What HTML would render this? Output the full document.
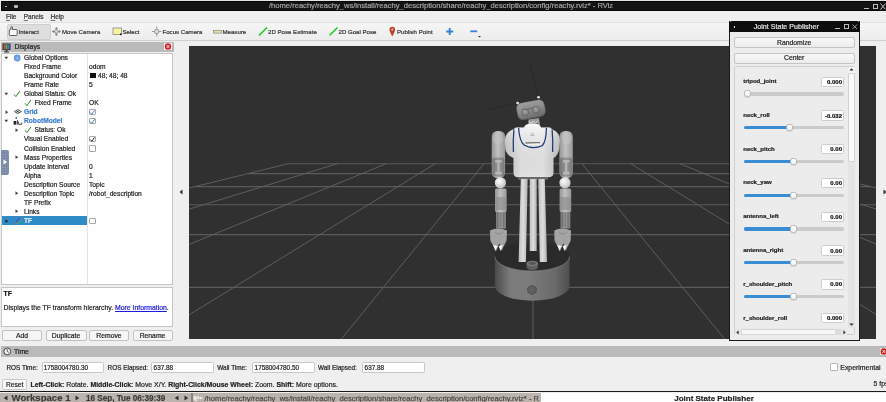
<!DOCTYPE html>
<html><head><meta charset="utf-8"><style>
html,body{margin:0;padding:0;}
body{width:886px;height:402px;overflow:hidden;position:relative;background:#efefef;font-family:"Liberation Sans",sans-serif;}
.t{position:absolute;white-space:nowrap;line-height:12px;height:12px;-webkit-text-stroke-width:0.2px;}
u{text-decoration:underline;text-underline-offset:1px;text-decoration-thickness:0.5px;text-decoration-color:#777;}
</style></head><body>
<div style="position:absolute;left:0;top:0;width:886px;height:402px;will-change:transform;background:#efefef">
<div style="position:absolute;left:0px;top:0px;width:886px;height:1.2px;background:#e4e4e4"></div>
<div style="position:absolute;left:1.2px;top:1.2px;width:884.8px;height:10.3px;background:#141414;border:0.6px solid #050505;box-sizing:border-box"></div>
<div style="position:absolute;left:0;top:1.2px;width:886px;height:10.3px;overflow:hidden"><div class="t" style="left:269px;top:-0.8px;font-size:7.58px;color:#a4a4a4">/home/reachy/reachy_ws/install/reachy_description/share/reachy_description/config/reachy.rviz* - RViz</div></div>
<div style="position:absolute;left:5px;top:5.5px;width:1.5px;height:1.5px;background:#bbb"></div>
<div style="position:absolute;left:14px;top:5px;width:4px;height:2.5px;background:#bbb;border-radius:1px"></div>
<div style="position:absolute;left:864px;top:8px;width:5px;height:1.2px;background:#bbb"></div>
<div style="position:absolute;left:872.6px;top:3.5px;width:5px;height:5px;border:1.2px solid #bbb;box-sizing:border-box"></div>
<svg style="position:absolute;left:880px;top:3px" width="6" height="7"><path d="M0.5 0.5L5.5 6.5M5.5 0.5L0.5 6.5" stroke="#bbb" stroke-width="1"/></svg>
<div class="t" style="left:6px;top:10.80px;font-size:6.5px;color:#333;font-weight:400;"><u>F</u>ile</div>
<div class="t" style="left:23.7px;top:10.80px;font-size:6.5px;color:#333;font-weight:400;"><u>P</u>anels</div>
<div class="t" style="left:50.6px;top:10.80px;font-size:6.5px;color:#333;font-weight:400;"><u>H</u>elp</div>
<div style="position:absolute;left:0px;top:21.6px;width:886px;height:18.4px;background:linear-gradient(#f6f6f6,#ededed)"></div>
<div style="position:absolute;left:0px;top:21.6px;width:886px;height:0.8px;background:#e2e2e2"></div>
<div style="position:absolute;left:0px;top:40px;width:886px;height:1px;background:#cfcfcf"></div>
<div style="position:absolute;left:7px;top:23.5px;width:44px;height:16px;background:#dedede;border:1px solid #cfcfcf;border-radius:2px;box-sizing:border-box"></div>
<div class="t" style="left:18.5px;top:25.80px;font-size:6.1px;color:#333;font-weight:400;">Interact</div>
<div class="t" style="left:62px;top:25.80px;font-size:6.1px;color:#333;font-weight:400;">Move Camera</div>
<div class="t" style="left:122.5px;top:25.80px;font-size:6.1px;color:#333;font-weight:400;">Select</div>
<div class="t" style="left:162.5px;top:25.80px;font-size:6.1px;color:#333;font-weight:400;">Focus Camera</div>
<div class="t" style="left:222.5px;top:25.80px;font-size:6.1px;color:#333;font-weight:400;">Measure</div>
<div class="t" style="left:268px;top:25.80px;font-size:6.1px;color:#333;font-weight:400;">2D Pose Estimate</div>
<div class="t" style="left:338.5px;top:25.80px;font-size:6.1px;color:#333;font-weight:400;">2D Goal Pose</div>
<div class="t" style="left:397px;top:25.80px;font-size:6.1px;color:#333;font-weight:400;">Publish Point</div>
<svg style="position:absolute;left:0;top:22px" width="490" height="18">
<path d="M11 7.3 L11 4.9 Q11.7 4 12.4 4.9 L12.4 7.5 L16.4 7.5 Q17.2 7.5 17.2 8.3 L17.2 12.8 Q17.2 13.5 16.4 13.5 L10.1 13.5 Q9.3 13.5 9.3 12.8 L9.3 8.4 Q9.3 7.5 10.2 7.3Z" fill="#f8f8f8" stroke="#333" stroke-width="0.75"/>
<g stroke="#6a6a6a" stroke-width="0.7" fill="none"><path d="M56.4 5.5 L56.4 13.5 M52.4 9.5 L60.4 9.5 M55 6.9 L56.4 5.5 L57.8 6.9 M55 12.1 L56.4 13.5 L57.8 12.1 M53.8 8.1 L52.4 9.5 L53.8 10.9 M59 8.1 L60.4 9.5 L59 10.9"/><circle cx="56.4" cy="9.5" r="1.8" fill="#e0e0e0"/></g>
<rect x="113" y="6" width="8.5" height="6.5" fill="#f7f3a0" stroke="#777" stroke-width="0.7"/>
<rect x="120" y="11.5" width="1.6" height="1.6" fill="#111"/>
<g stroke="#888" stroke-width="0.8" fill="none"><path d="M156.7 4.5 L156.7 14.5 M152 9.5 L161.5 9.5"/><circle cx="156.7" cy="9.5" r="2.3" fill="#ddd"/></g>
<rect x="213.5" y="8.3" width="8" height="2.8" fill="#e8e0a0" stroke="#777" stroke-width="0.6"/>
<path d="M259 13.5 L267 5.5" stroke="#22cc22" stroke-width="1.6"/>
<path d="M329.5 13.5 L337.5 5.5" stroke="#22cc22" stroke-width="1.6"/>
<path d="M392.3 14.5 Q389.5 9.5 389.5 7.5 A2.8 2.8 0 0 1 395.1 7.5 Q395.1 9.5 392.3 14.5Z" fill="#b8442c"/>
<circle cx="392.3" cy="7.5" r="0.9" fill="#f0d0c0"/>
<path d="M449.7 6 L449.7 13 M446.2 9.5 L453.2 9.5" stroke="#3a80d2" stroke-width="1.9"/>
<path d="M470.3 9.3 L477.2 9.3" stroke="#3a80d2" stroke-width="1.8"/>
<path d="M478 14 L481 14 L479.5 15.5Z" fill="#333"/>
</svg>
<div style="position:absolute;left:1px;top:42.2px;width:172.5px;height:10.3px;background:#bababa"></div>
<div class="t" style="left:14.5px;top:41.30px;font-size:6.8px;color:#1e1e1e;font-weight:400;">Displays</div>
<svg style="position:absolute;left:2px;top:43px" width="11" height="10">
<rect x="0.5" y="0.5" width="8" height="6.5" fill="#333"/>
<rect x="1.5" y="1.3" width="2" height="5" fill="#e04040"/><rect x="3.5" y="1.3" width="2" height="5" fill="#40c040"/><rect x="5.5" y="1.3" width="2" height="5" fill="#6060e0"/>
<rect x="3.5" y="7" width="2" height="1.5" fill="#333"/><rect x="2" y="8.5" width="5" height="1" fill="#333"/>
</svg>
<div style="position:absolute;left:164px;top:43.2px;width:8px;height:7px;background:#f4f4f4"></div>
<svg style="position:absolute;left:164px;top:43px" width="8" height="7"><circle cx="4" cy="3.5" r="3.2" fill="#d42020"/><path d="M2.6 2.1L5.4 4.9M5.4 2.1L2.6 4.9" stroke="#fff" stroke-width="0.9"/></svg>
<div style="position:absolute;left:1px;top:52.8px;width:172px;height:232px;background:#fff;border:1px solid #c6c6c6;box-sizing:border-box"></div>
<div style="position:absolute;left:87.3px;top:53.5px;width:0.8px;height:230px;background:#e4e4e4"></div>
<div style="position:absolute;left:1.8px;top:216.1px;width:85.5px;height:8.7px;background:#308cc6"></div>
<div class="t" style="left:24px;top:51.80px;font-size:6.65px;color:#1e1e1e;font-weight:400;">Global Options</div>
<svg style="position:absolute;left:4.2px;top:55.5px" width="5" height="4"><path d="M0.3 0.8L4.2 0.8L2.25 3.2Z" fill="#444"/></svg>
<svg style="position:absolute;left:13px;top:53.5px" width="9" height="8"><circle cx="4.2" cy="4" r="3.4" fill="#6c9be0"/><circle cx="4.2" cy="4" r="1.5" fill="#8fb5ee"/></svg>
<div class="t" style="left:24px;top:60.90px;font-size:6.65px;color:#1e1e1e;font-weight:400;">Fixed Frame</div>
<div class="t" style="left:89px;top:60.90px;font-size:6.65px;color:#1e1e1e;font-weight:400;">odom</div>
<div class="t" style="left:24px;top:69.90px;font-size:6.65px;color:#1e1e1e;font-weight:400;">Background Color</div>
<div style="position:absolute;left:90px;top:73px;width:5.5px;height:5px;background:#111"></div>
<div class="t" style="left:98px;top:69.90px;font-size:6.65px;color:#1e1e1e;font-weight:400;">48; 48; 48</div>
<div class="t" style="left:24px;top:79.00px;font-size:6.65px;color:#1e1e1e;font-weight:400;">Frame Rate</div>
<div class="t" style="left:89px;top:79.00px;font-size:6.65px;color:#1e1e1e;font-weight:400;">5</div>
<div class="t" style="left:24px;top:88.10px;font-size:6.65px;color:#1e1e1e;font-weight:400;">Global Status: Ok</div>
<svg style="position:absolute;left:4.2px;top:91.8px" width="5" height="4"><path d="M0.3 0.8L4.2 0.8L2.25 3.2Z" fill="#444"/></svg>
<svg style="position:absolute;left:13px;top:89.8px" width="9" height="8"><path d="M1 4.3L2.9 6.6L6.9 0.9" stroke="#2a8c2a" stroke-width="1" fill="none"/></svg>
<div class="t" style="left:34.5px;top:97.10px;font-size:6.65px;color:#1e1e1e;font-weight:400;">Fixed Frame</div>
<svg style="position:absolute;left:23.5px;top:98.8px" width="9" height="8"><path d="M1 4.3L2.9 6.6L6.9 0.9" stroke="#2a8c2a" stroke-width="1" fill="none"/></svg>
<div class="t" style="left:89px;top:97.10px;font-size:6.65px;color:#1e1e1e;font-weight:400;">OK</div>
<div class="t" style="left:24px;top:106.20px;font-size:6.65px;color:#3a7bd0;font-weight:700;">Grid</div>
<svg style="position:absolute;left:4.7px;top:109.7px" width="4" height="5"><path d="M0.5 0.3L3.2 2.2L0.5 4.1Z" fill="#444"/></svg>
<svg style="position:absolute;left:13.5px;top:108.9px" width="9" height="6"><path d="M0.3 2.6L3.8 0.6L7.5 2.6L3.8 4.6Z M2 1.6L5.6 3.6 M5.6 1.6L2 3.6" stroke="#333" stroke-width="0.75" fill="none"/></svg>
<div style="position:absolute;left:89px;top:108.7px;width:6.5px;height:6.5px;background:#fff;border:0.8px solid #a8a8a8;border-radius:1px;box-sizing:border-box"></div>
<svg style="position:absolute;left:89px;top:108.7px" width="7" height="7"><path d="M1.3 3.6L2.8 5.2L5.6 1.3" stroke="#2a6ad0" stroke-width="0.9" fill="none"/></svg>
<div class="t" style="left:24px;top:115.30px;font-size:6.65px;color:#3a7bd0;font-weight:700;">RobotModel</div>
<svg style="position:absolute;left:4.2px;top:119px" width="5" height="4"><path d="M0.3 0.8L4.2 0.8L2.25 3.2Z" fill="#444"/></svg>
<svg style="position:absolute;left:13px;top:116px" width="10" height="10"><circle cx="3.3" cy="2" r="0.9" fill="#4a5cc0"/><rect x="0.6" y="5" width="2.8" height="3.6" fill="#222"/><rect x="4" y="4" width="0.9" height="4.6" fill="#444"/><path d="M5.6 5.6 L5.6 8.3 L8.6 8.3 L8.9 6.5" stroke="#333" stroke-width="0.9" fill="none"/></svg>
<div style="position:absolute;left:89px;top:117.8px;width:6.5px;height:6.5px;background:#fff;border:0.8px solid #a8a8a8;border-radius:1px;box-sizing:border-box"></div>
<svg style="position:absolute;left:89px;top:117.8px" width="7" height="7"><path d="M1.3 3.6L2.8 5.2L5.6 1.3" stroke="#2a6ad0" stroke-width="0.9" fill="none"/></svg>
<div class="t" style="left:34.5px;top:124.30px;font-size:6.65px;color:#1e1e1e;font-weight:400;">Status: Ok</div>
<svg style="position:absolute;left:14.5px;top:127.8px" width="4" height="5"><path d="M0.5 0.3L3.2 2.2L0.5 4.1Z" fill="#444"/></svg>
<svg style="position:absolute;left:23.5px;top:126px" width="9" height="8"><path d="M1 4.3L2.9 6.6L6.9 0.9" stroke="#2a8c2a" stroke-width="1" fill="none"/></svg>
<div class="t" style="left:24px;top:133.40px;font-size:6.65px;color:#1e1e1e;font-weight:400;">Visual Enabled</div>
<div style="position:absolute;left:89px;top:135.9px;width:6.5px;height:6.5px;background:#fff;border:0.8px solid #a8a8a8;border-radius:1px;box-sizing:border-box"></div>
<svg style="position:absolute;left:89px;top:135.9px" width="7" height="7"><path d="M1.3 3.6L2.8 5.2L5.6 1.3" stroke="#111" stroke-width="0.9" fill="none"/></svg>
<div class="t" style="left:24px;top:142.50px;font-size:6.65px;color:#1e1e1e;font-weight:400;">Collision Enabled</div>
<div style="position:absolute;left:89px;top:145.0px;width:6.5px;height:6.5px;background:#fff;border:0.8px solid #a8a8a8;border-radius:1px;box-sizing:border-box"></div>
<div class="t" style="left:24px;top:151.50px;font-size:6.65px;color:#1e1e1e;font-weight:400;">Mass Properties</div>
<svg style="position:absolute;left:14.5px;top:155.0px" width="4" height="5"><path d="M0.5 0.3L3.2 2.2L0.5 4.1Z" fill="#444"/></svg>
<div class="t" style="left:24px;top:160.60px;font-size:6.65px;color:#1e1e1e;font-weight:400;">Update Interval</div>
<div class="t" style="left:89px;top:160.60px;font-size:6.65px;color:#1e1e1e;font-weight:400;">0</div>
<div class="t" style="left:24px;top:169.70px;font-size:6.65px;color:#1e1e1e;font-weight:400;">Alpha</div>
<div class="t" style="left:89px;top:169.70px;font-size:6.65px;color:#1e1e1e;font-weight:400;">1</div>
<div class="t" style="left:24px;top:178.70px;font-size:6.65px;color:#1e1e1e;font-weight:400;">Description Source</div>
<div class="t" style="left:89px;top:178.70px;font-size:6.65px;color:#1e1e1e;font-weight:400;">Topic</div>
<div class="t" style="left:24px;top:187.80px;font-size:6.65px;color:#1e1e1e;font-weight:400;">Description Topic</div>
<svg style="position:absolute;left:14.5px;top:191.3px" width="4" height="5"><path d="M0.5 0.3L3.2 2.2L0.5 4.1Z" fill="#444"/></svg>
<div class="t" style="left:89px;top:187.80px;font-size:6.65px;color:#1e1e1e;font-weight:400;">/robot_description</div>
<div class="t" style="left:24px;top:196.90px;font-size:6.65px;color:#1e1e1e;font-weight:400;">TF Prefix</div>
<div class="t" style="left:24px;top:205.90px;font-size:6.65px;color:#1e1e1e;font-weight:400;">Links</div>
<svg style="position:absolute;left:14.5px;top:209.4px" width="4" height="5"><path d="M0.5 0.3L3.2 2.2L0.5 4.1Z" fill="#444"/></svg>
<div class="t" style="left:24px;top:215.00px;font-size:6.65px;color:#ffffff;font-weight:400;">TF</div>
<svg style="position:absolute;left:4.7px;top:218.5px" width="4" height="5"><path d="M0.5 0.3L3.2 2.2L0.5 4.1Z" fill="#222"/></svg>
<svg style="position:absolute;left:13.5px;top:216.2px" width="9" height="9"><path d="M0.8 8.3L4.5 5L7 1.2" stroke="#d04848" stroke-width="0.8" fill="none"/><path d="M2.5 7.5L5 6.5L7.5 4.5" stroke="#30c060" stroke-width="0.9" fill="none"/><path d="M2.3 6.2L3 3.3M4.5 5L5 1.5" stroke="#3050e0" stroke-width="0.9" fill="none"/></svg>
<div style="position:absolute;left:89px;top:217.5px;width:6.5px;height:6.5px;background:#fff;border:0.8px solid #a8a8a8;border-radius:1px;box-sizing:border-box"></div>
<div style="position:absolute;left:1px;top:287px;width:172px;height:39.5px;background:#fff;border:1px solid #c6c6c6;box-sizing:border-box"></div>
<div class="t" style="left:3.5px;top:288.20px;font-size:6.8px;color:#111;font-weight:700;">TF</div>
<div class="t" style="left:3.5px;top:302.20px;font-size:6.85px;color:#1e1e1e;font-weight:400;">Displays the TF transform hierarchy. <span style="color:#1a1ae0;text-decoration:underline">More Information</span>.</div>
<div style="position:absolute;left:2px;top:330px;width:40px;height:10.5px;background:#f6f6f6;border:0.8px solid #c2c2c2;border-radius:2px;box-sizing:border-box"></div>
<div class="t" style="left:2px;width:40px;text-align:center;top:330.1px;font-size:6.8px;color:#1e1e1e">Add</div>
<div style="position:absolute;left:45.5px;top:330px;width:41px;height:10.5px;background:#f6f6f6;border:0.8px solid #c2c2c2;border-radius:2px;box-sizing:border-box"></div>
<div class="t" style="left:45.5px;width:41px;text-align:center;top:330.1px;font-size:6.8px;color:#1e1e1e">Duplicate</div>
<div style="position:absolute;left:89px;top:330px;width:40px;height:10.5px;background:#f6f6f6;border:0.8px solid #c2c2c2;border-radius:2px;box-sizing:border-box"></div>
<div class="t" style="left:89px;width:40px;text-align:center;top:330.1px;font-size:6.8px;color:#1e1e1e">Remove</div>
<div style="position:absolute;left:132.5px;top:330px;width:40px;height:10.5px;background:#f6f6f6;border:0.8px solid #c2c2c2;border-radius:2px;box-sizing:border-box"></div>
<div class="t" style="left:132.5px;width:40px;text-align:center;top:330.1px;font-size:6.8px;color:#1e1e1e">Rename</div>
<div style="position:absolute;left:1px;top:149.5px;width:8px;height:25.2px;background:#7a89a8;border-radius:0 2px 2px 0;background-image:radial-gradient(circle,#a6b0c4 0.5px,transparent 0.6px);background-size:2.6px 2.6px;background-position:0.6px 0.6px"></div>
<svg style="position:absolute;left:2.5px;top:159px" width="5" height="6"><path d="M0.5 0.5L4 3L0.5 5.5Z" fill="#fff"/></svg>
<svg style="position:absolute;left:179px;top:188.8px" width="4" height="6"><path d="M3.5 0.5L0.5 3L3.5 5.5Z" fill="#333"/></svg>
<svg style="position:absolute;left:883px;top:188.8px" width="4" height="6"><path d="M0.5 0.5L3.5 3L0.5 5.5Z" fill="#333"/></svg>
<div style="position:absolute;left:189px;top:46px;width:687px;height:292.5px;background:#303030"></div>
<svg style="position:absolute;left:189px;top:46px" width="687" height="292.5" viewBox="189 46 687 292.5">
<defs>
<linearGradient id="gHead" x1="0.3" y1="0" x2="0.5" y2="1"><stop offset="0" stop-color="#9c9c9c"/><stop offset="0.5" stop-color="#8c8c8c"/><stop offset="1" stop-color="#6e6e6e"/></linearGradient>
<linearGradient id="gTorso" x1="0" y1="0" x2="1" y2="0"><stop offset="0" stop-color="#cfcfcf"/><stop offset="0.3" stop-color="#f4f4f4"/><stop offset="0.7" stop-color="#f6f6f6"/><stop offset="1" stop-color="#cacaca"/></linearGradient>
<linearGradient id="gTorsoV" x1="0" y1="0" x2="0" y2="1"><stop offset="0" stop-color="#ffffff" stop-opacity="0.3"/><stop offset="1" stop-color="#000" stop-opacity="0.08"/></linearGradient>
<linearGradient id="gArm" x1="0" y1="0" x2="1" y2="0"><stop offset="0" stop-color="#959595"/><stop offset="0.45" stop-color="#c0c0c0"/><stop offset="1" stop-color="#9a9a9a"/></linearGradient>
<linearGradient id="gArmD" x1="0" y1="0" x2="1" y2="0"><stop offset="0" stop-color="#777"/><stop offset="0.5" stop-color="#979797"/><stop offset="1" stop-color="#7a7a7a"/></linearGradient>
<linearGradient id="gLeg" x1="0" y1="0" x2="1" y2="0"><stop offset="0" stop-color="#bdbdbd"/><stop offset="0.5" stop-color="#dedede"/><stop offset="1" stop-color="#b0b0b0"/></linearGradient>
<linearGradient id="gBase" x1="0" y1="0" x2="1" y2="0"><stop offset="0" stop-color="#4a4a4a"/><stop offset="0.2" stop-color="#7a7a7a"/><stop offset="0.45" stop-color="#7c7c7c"/><stop offset="0.8" stop-color="#6a6a6a"/><stop offset="1" stop-color="#4e4e4e"/></linearGradient>
<radialGradient id="gWhite" cx="0.4" cy="0.35" r="0.7"><stop offset="0" stop-color="#ffffff"/><stop offset="1" stop-color="#bcbcbc"/></radialGradient>
<filter id="blur" x="-10%" y="-10%" width="120%" height="120%"><feGaussianBlur stdDeviation="0.35"/></filter>
</defs>
<g stroke="#5a5a5a" stroke-width="1.15" fill="none">
<line x1="288.29" y1="163.7" x2="777.71" y2="163.7"/>
<line x1="248.01" y1="173.6" x2="817.99" y2="173.6"/>
<line x1="195.11" y1="186.6" x2="870.89" y2="186.6"/>
<line x1="189.00" y1="204.7" x2="876.00" y2="204.7"/>
<line x1="189.00" y1="234.6" x2="876.00" y2="234.6"/>
<line x1="189.00" y1="287.3" x2="876.00" y2="287.3"/>
</g><g stroke="#606060" stroke-width="0.95" fill="none">
<line x1="288.29" y1="163.7" x2="-443.32" y2="343.50"/>
<line x1="337.23" y1="163.7" x2="-248.05" y2="343.50"/>
<line x1="386.17" y1="163.7" x2="-52.79" y2="343.50"/>
<line x1="435.12" y1="163.7" x2="142.47" y2="343.50"/>
<line x1="484.06" y1="163.7" x2="337.74" y2="343.50"/>
<line x1="533.00" y1="163.7" x2="533.00" y2="343.50"/>
<line x1="581.94" y1="163.7" x2="728.26" y2="343.50"/>
<line x1="630.88" y1="163.7" x2="923.53" y2="343.50"/>
<line x1="679.83" y1="163.7" x2="1118.79" y2="343.50"/>
<line x1="728.77" y1="163.7" x2="1314.05" y2="343.50"/>
<line x1="777.71" y1="163.7" x2="1509.32" y2="343.50"/>
</g>
<g filter="url(#blur)">
<path d="M494.9 256.5 L494.9 286 A37.35 14.7 0 0 0 569.6 286 L569.6 256.5Z" fill="url(#gBase)"/>
<ellipse cx="532.25" cy="256.5" rx="37.35" ry="14.5" fill="#2b2b2b"/>
<path d="M494.9 256.5 A37.35 14.5 0 0 0 569.6 256.5" stroke="#8a8a8a" stroke-width="0.6" fill="none"/>
<path d="M526.6 263.5 L526.6 267.3 A5.65 2.7 0 0 0 537.9 267.3 L537.9 263.5Z" fill="#5e5e5e"/>
<ellipse cx="532.25" cy="263.5" rx="5.65" ry="2.7" fill="#7a7a7a"/>
<ellipse cx="532.25" cy="263.3" rx="3.6" ry="1.6" fill="#555"/>
<path d="M532 285.3 L536.2 287.7 L536.2 292.2 L532 294.6 L527.8 292.2 L527.8 287.7Z" fill="#606060" stroke="#484848" stroke-width="0.8"/>
</g>
<g filter="url(#blur)">
<!-- antennas -->
<line x1="529.7" y1="63.1" x2="538.5" y2="96.8" stroke="#262a32" stroke-width="1.1"/>
<line x1="485.6" y1="110.5" x2="517.6" y2="102.7" stroke="#262a32" stroke-width="1.1"/>
<circle cx="529.7" cy="63.4" r="0.9" fill="#3a3a3a"/>
<circle cx="485.8" cy="110.4" r="0.9" fill="#3a3a3a"/>
<!-- neck -->
<path d="M528.5 119.5 L539 118 L540 125 L528 125.8Z" fill="#9a9a9a"/>
<path d="M529 121 L531 123.5 L533.2 121 L535.4 123.5 L537.8 120.8" stroke="#e8e8e8" stroke-width="0.9" fill="none"/>
<path d="M530 124.3 L538 123.6" stroke="#3a3a3a" stroke-width="0.8"/>
<!-- head -->
<g transform="rotate(-10.5 531 109.8)">
<rect x="516.6" y="101.2" width="28.8" height="17.2" rx="5.5" fill="#5e5e5e"/>
<rect x="517.3" y="101.6" width="27.4" height="15.8" rx="4.8" fill="url(#gHead)"/>
</g>
<path d="M526.5 109.8 Q530.5 107.5 534.5 108.2" stroke="#5a5a5a" stroke-width="0.9" fill="none"/>
<circle cx="525.2" cy="112.2" r="3.6" fill="#606060"/><circle cx="525.2" cy="112.2" r="2.8" fill="#8e8e8e"/><circle cx="524.6" cy="111.4" r="1.3" fill="#a2a2a2"/>
<circle cx="536" cy="109.6" r="3.6" fill="#606060"/><circle cx="536" cy="109.6" r="2.8" fill="#8e8e8e"/><circle cx="535.4" cy="108.8" r="1.3" fill="#a2a2a2"/>
<ellipse cx="538.5" cy="97.3" rx="1.5" ry="1.2" fill="#dcdcdc"/>
<ellipse cx="517.6" cy="103" rx="1.5" ry="1.2" fill="#dcdcdc"/>
<!-- upper arms -->
<rect x="491.7" y="131" width="13.4" height="47" rx="5.5" fill="url(#gArm)"/>
<rect x="492.3" y="157.5" width="12.2" height="19" rx="2" fill="url(#gArmD)"/>
<path d="M495.3 160 H501.7 V162.6 H499.5 V171.8 H501.7 V174.4 H495.3 V171.8 H497.5 V162.6 H495.3Z" fill="#b8b8b8"/>
<rect x="559.4" y="131" width="13.4" height="47" rx="5.5" fill="url(#gArm)"/>
<rect x="560" y="157.5" width="12.2" height="19" rx="2" fill="url(#gArmD)"/>
<path d="M563 160 H569.4 V162.6 H567.2 V171.8 H569.4 V174.4 H563 V171.8 H565.2 V162.6 H563Z" fill="#b8b8b8"/>
<ellipse cx="498" cy="138.5" rx="5" ry="6.5" fill="#c4c4c4" opacity="0.55"/>
<ellipse cx="566.6" cy="138.5" rx="5" ry="6.5" fill="#c4c4c4" opacity="0.55"/>
<!-- torso -->
<path d="M504.8 141 Q504.8 132.5 513 129.5 L516 127.5 L524 127.5 Q525 123.5 532.5 123.5 Q540 123.5 541 127.5 L550 127.5 L552.5 129.5 Q560 132.5 559.8 141 L559 150 Q557 156.5 553.5 158 L553.5 172.5 Q553.5 177.3 548.5 177.3 L518 177.3 Q513.5 177.3 513.5 172.5 L513.5 158 Q507.5 156 505.5 150Z" fill="url(#gTorso)"/>
<path d="M504.8 141 Q504.8 132.5 513 129.5 L516 127.5 L524 127.5 Q525 123.5 532.5 123.5 Q540 123.5 541 127.5 L550 127.5 L552.5 129.5 Q560 132.5 559.8 141 L559 150 Q557 156.5 553.5 158 L553.5 172.5 Q553.5 177.3 548.5 177.3 L518 177.3 Q513.5 177.3 513.5 172.5 L513.5 158 Q507.5 156 505.5 150Z" fill="url(#gTorsoV)"/>
<path d="M518.6 128 Q519.5 141 524 145 Q533 150 542.5 145.5 Q546.2 141 546.4 128" stroke="#1a3878" stroke-width="1.25" fill="none"/>
<path d="M513.9 129.5 Q512.8 142 513.4 152" stroke="#1a3878" stroke-width="1.25" fill="none"/>
<path d="M552.1 129.5 Q553.2 142 552.6 152" stroke="#1a3878" stroke-width="1.25" fill="none"/>
<path d="M525.5 143 L540 142.6" stroke="#707070" stroke-width="1.4"/>
<path d="M525.5 144.4 L540 144" stroke="#ffffff" stroke-width="0.8"/>
<path d="M530.5 135.5 L532.3 132.8 L534.1 135.5Z" fill="none" stroke="#9a9a9a" stroke-width="0.6"/>
<rect x="518" y="177" width="30" height="2.5" fill="#6a6a6a"/>
<!-- legs -->
<path d="M520.8 179 L527.7 179 L525.9 262 L518.6 262Z" fill="url(#gLeg)"/>
<path d="M529.7 179 L536.7 179 L536.7 251 L529.7 251Z" fill="url(#gLeg)"/>
<path d="M538.3 179 L544.8 179 L547 262 L539.8 262Z" fill="url(#gLeg)"/>
<!-- forearms L -->
<circle cx="500.4" cy="182.8" r="5.6" fill="url(#gWhite)"/>
<rect x="495" y="188.5" width="11.6" height="23.5" rx="1.5" fill="url(#gArm)"/>
<rect x="495.3" y="197" width="11" height="13" fill="#8a8a8a" opacity="0.6"/>
<rect x="496" y="212" width="10" height="16.5" fill="url(#gArmD)"/>
<path d="M498 213 V227 M500.8 213 V227 M503.6 213 V227" stroke="#5a5a5a" stroke-width="0.5"/>
<path d="M490 230.5 Q498 226.5 507 230.5 L506.5 240.5 L501.5 251 L499.5 243 L496 251 L490.3 240.5Z" fill="#a4a4a4"/>
<path d="M493.2 245 L495.4 251 L497.6 246Z" fill="#f4f4f4"/>
<path d="M498.6 246 L500.6 251 L502.8 245Z" fill="#f4f4f4"/>
<path d="M495 232 Q499 236 503 232" stroke="#777" stroke-width="0.6" fill="none"/>
<!-- forearms R -->
<circle cx="565" cy="182.8" r="5.6" fill="url(#gWhite)"/>
<rect x="559.6" y="188.5" width="11.6" height="23.5" rx="1.5" fill="url(#gArm)"/>
<rect x="559.9" y="197" width="11" height="13" fill="#8a8a8a" opacity="0.6"/>
<rect x="560.4" y="212" width="10" height="16.5" fill="url(#gArmD)"/>
<path d="M562.4 213 V227 M565.2 213 V227 M568 213 V227" stroke="#5a5a5a" stroke-width="0.5"/>
<path d="M554.3 230.5 Q562 226.5 571 230.5 L570.7 240.5 L565.5 251 L563.5 243 L560 251 L554.5 240.5Z" fill="#a4a4a4"/>
<path d="M557.2 245 L559.4 251 L561.6 246Z" fill="#f4f4f4"/>
<path d="M562.6 246 L564.6 251 L566.8 245Z" fill="#f4f4f4"/>
<path d="M559 232 Q563 236 567 232" stroke="#777" stroke-width="0.6" fill="none"/>
</g>

</svg>
<div style="position:absolute;left:728.7px;top:20.9px;width:131px;height:320px;background:#ececec;border:1px solid #1a1a1a;border-top:none;box-sizing:border-box"></div>
<div style="position:absolute;left:728.7px;top:20.9px;width:131px;height:11.3px;background:#0c0c0c;border-radius:3.5px 3.5px 0 0"></div>
<div style="position:absolute;left:734px;top:26.3px;width:1.3px;height:1.3px;background:#ddd"></div>
<div class="t" style="left:753.8px;top:20.80px;font-size:7.1px;color:#e2e2e2;font-weight:400;">Joint State Publisher</div>
<div style="position:absolute;left:834.5px;top:28.4px;width:5px;height:1.1px;background:#bbb"></div>
<div style="position:absolute;left:843.5px;top:24.2px;width:5.5px;height:5px;border:1px solid #bbb;box-sizing:border-box"></div>
<svg style="position:absolute;left:851.5px;top:24px" width="6" height="6"><path d="M0.5 0.5L5 5M5 0.5L0.5 5" stroke="#bbb" stroke-width="0.8"/></svg>
<div style="position:absolute;left:733.6px;top:37.3px;width:121.2px;height:11.2px;background:linear-gradient(#f7f7f7,#ececec);border:0.8px solid #c4c4c4;border-radius:2px;box-sizing:border-box"></div>
<div class="t" style="left:733.6px;width:121.2px;text-align:center;top:37.0px;font-size:6.8px;color:#1e1e1e">Randomize</div>
<div style="position:absolute;left:733.6px;top:52.5px;width:121.2px;height:11.2px;background:linear-gradient(#f7f7f7,#ececec);border:0.8px solid #c4c4c4;border-radius:2px;box-sizing:border-box"></div>
<div class="t" style="left:733.6px;width:121.2px;text-align:center;top:52.2px;font-size:6.8px;color:#1e1e1e">Center</div>
<div style="position:absolute;left:733.8px;top:66.4px;width:121px;height:268.6px;background:#ececec;border:0.8px solid #cfcfcf;border-radius:1.5px;box-sizing:border-box"></div>
<div style="position:absolute;left:847.6px;top:67px;width:7px;height:261px;background:#e4e4e4"></div>
<div style="position:absolute;left:848px;top:73px;width:7px;height:89px;background:#f9f9f9;border:0.6px solid #d2d2d2;box-sizing:border-box;border-radius:1px"></div>
<div style="position:absolute;left:848px;top:67px;width:7px;height:6px;background:#f6f6f6"></div>
<svg style="position:absolute;left:849px;top:68px" width="5" height="3"><path d="M0.3 2.6L2.5 0.3L4.7 2.6Z" fill="#333"/></svg>
<svg style="position:absolute;left:849px;top:322.6px" width="5" height="3"><path d="M0.3 0.4L2.5 2.7L4.7 0.4Z" fill="#333"/></svg>
<div style="position:absolute;left:734.5px;top:328.4px;width:112.5px;height:6.5px;background:#e9e9e9"></div>
<div style="position:absolute;left:741px;top:328.6px;width:95px;height:6px;background:#f7f7f7;border:0.5px solid #d6d6d6;box-sizing:border-box"></div>
<div style="position:absolute;left:835px;top:328.6px;width:6px;height:6px;background:#dcdcdc"></div>
<svg style="position:absolute;left:736px;top:329.6px" width="3" height="5"><path d="M2.6 0.3L0.3 2.4L2.6 4.5Z" fill="#333"/></svg>
<svg style="position:absolute;left:842.5px;top:329.6px" width="3" height="5"><path d="M0.4 0.3L2.7 2.4L0.4 4.5Z" fill="#333"/></svg>
<div class="t" style="left:743.2px;top:75.10px;font-size:6.05px;color:#1c1c1c;font-weight:700;">tripod_joint</div>
<div style="position:absolute;left:821.4px;top:76.5px;width:22.2px;height:10.4px;background:#fff;border:0.7px solid #cdcdcd;border-radius:1.5px;box-sizing:border-box"></div>
<div class="t" style="left:821.4px;width:20.6px;text-align:right;top:75.8px;font-size:6px;font-weight:700;color:#111">0.000</div>
<div style="position:absolute;left:744px;top:92.2px;width:99.6px;height:3.4px;background:#cbcbcb;border-radius:1.7px"></div>
<div style="position:absolute;left:743.7px;top:90.30000000000001px;width:7.6px;height:7.2px;background:linear-gradient(#fff,#efefef);border:0.7px solid #b8b8b8;border-radius:2.6px;box-sizing:border-box;box-shadow:0 0.5px 0.8px rgba(0,0,0,0.15)"></div>
<div class="t" style="left:743.2px;top:108.88px;font-size:6.05px;color:#1c1c1c;font-weight:700;">neck_roll</div>
<div style="position:absolute;left:821.4px;top:110.28px;width:22.2px;height:10.4px;background:#fff;border:0.7px solid #cdcdcd;border-radius:1.5px;box-sizing:border-box"></div>
<div class="t" style="left:821.4px;width:20.6px;text-align:right;top:109.58px;font-size:6px;font-weight:700;color:#111">-0.032</div>
<div style="position:absolute;left:744px;top:125.98px;width:99.6px;height:3.4px;background:#cbcbcb;border-radius:1.7px"></div>
<div style="position:absolute;left:744px;top:125.98px;width:45.360000000000014px;height:3.4px;background:#3a8dd2;border-radius:1.7px"></div>
<div style="position:absolute;left:785.5600000000001px;top:124.08000000000001px;width:7.6px;height:7.2px;background:linear-gradient(#fff,#efefef);border:0.7px solid #b8b8b8;border-radius:2.6px;box-sizing:border-box;box-shadow:0 0.5px 0.8px rgba(0,0,0,0.15)"></div>
<div class="t" style="left:743.2px;top:142.66px;font-size:6.05px;color:#1c1c1c;font-weight:700;">neck_pitch</div>
<div style="position:absolute;left:821.4px;top:144.06px;width:22.2px;height:10.4px;background:#fff;border:0.7px solid #cdcdcd;border-radius:1.5px;box-sizing:border-box"></div>
<div class="t" style="left:821.4px;width:20.6px;text-align:right;top:143.36px;font-size:6px;font-weight:700;color:#111">0.00</div>
<div style="position:absolute;left:744px;top:159.76000000000002px;width:99.6px;height:3.4px;background:#cbcbcb;border-radius:1.7px"></div>
<div style="position:absolute;left:744px;top:159.76000000000002px;width:49.5px;height:3.4px;background:#3a8dd2;border-radius:1.7px"></div>
<div style="position:absolute;left:789.7px;top:157.86px;width:7.6px;height:7.2px;background:linear-gradient(#fff,#efefef);border:0.7px solid #b8b8b8;border-radius:2.6px;box-sizing:border-box;box-shadow:0 0.5px 0.8px rgba(0,0,0,0.15)"></div>
<div class="t" style="left:743.2px;top:176.44px;font-size:6.05px;color:#1c1c1c;font-weight:700;">neck_yaw</div>
<div style="position:absolute;left:821.4px;top:177.84px;width:22.2px;height:10.4px;background:#fff;border:0.7px solid #cdcdcd;border-radius:1.5px;box-sizing:border-box"></div>
<div class="t" style="left:821.4px;width:20.6px;text-align:right;top:177.14000000000001px;font-size:6px;font-weight:700;color:#111">0.00</div>
<div style="position:absolute;left:744px;top:193.54000000000002px;width:99.6px;height:3.4px;background:#cbcbcb;border-radius:1.7px"></div>
<div style="position:absolute;left:744px;top:193.54000000000002px;width:49.5px;height:3.4px;background:#3a8dd2;border-radius:1.7px"></div>
<div style="position:absolute;left:789.7px;top:191.64000000000001px;width:7.6px;height:7.2px;background:linear-gradient(#fff,#efefef);border:0.7px solid #b8b8b8;border-radius:2.6px;box-sizing:border-box;box-shadow:0 0.5px 0.8px rgba(0,0,0,0.15)"></div>
<div class="t" style="left:743.2px;top:210.22px;font-size:6.05px;color:#1c1c1c;font-weight:700;">antenna_left</div>
<div style="position:absolute;left:821.4px;top:211.62px;width:22.2px;height:10.4px;background:#fff;border:0.7px solid #cdcdcd;border-radius:1.5px;box-sizing:border-box"></div>
<div class="t" style="left:821.4px;width:20.6px;text-align:right;top:210.92000000000002px;font-size:6px;font-weight:700;color:#111">0.00</div>
<div style="position:absolute;left:744px;top:227.32000000000002px;width:99.6px;height:3.4px;background:#cbcbcb;border-radius:1.7px"></div>
<div style="position:absolute;left:744px;top:227.32000000000002px;width:49.5px;height:3.4px;background:#3a8dd2;border-radius:1.7px"></div>
<div style="position:absolute;left:789.7px;top:225.42000000000002px;width:7.6px;height:7.2px;background:linear-gradient(#fff,#efefef);border:0.7px solid #b8b8b8;border-radius:2.6px;box-sizing:border-box;box-shadow:0 0.5px 0.8px rgba(0,0,0,0.15)"></div>
<div class="t" style="left:743.2px;top:244.00px;font-size:6.05px;color:#1c1c1c;font-weight:700;">antenna_right</div>
<div style="position:absolute;left:821.4px;top:245.4px;width:22.2px;height:10.4px;background:#fff;border:0.7px solid #cdcdcd;border-radius:1.5px;box-sizing:border-box"></div>
<div class="t" style="left:821.4px;width:20.6px;text-align:right;top:244.70000000000002px;font-size:6px;font-weight:700;color:#111">0.00</div>
<div style="position:absolute;left:744px;top:261.1px;width:99.6px;height:3.4px;background:#cbcbcb;border-radius:1.7px"></div>
<div style="position:absolute;left:744px;top:261.1px;width:49.5px;height:3.4px;background:#3a8dd2;border-radius:1.7px"></div>
<div style="position:absolute;left:789.7px;top:259.2px;width:7.6px;height:7.2px;background:linear-gradient(#fff,#efefef);border:0.7px solid #b8b8b8;border-radius:2.6px;box-sizing:border-box;box-shadow:0 0.5px 0.8px rgba(0,0,0,0.15)"></div>
<div class="t" style="left:743.2px;top:277.78px;font-size:6.05px;color:#1c1c1c;font-weight:700;">r_shoulder_pitch</div>
<div style="position:absolute;left:821.4px;top:279.18px;width:22.2px;height:10.4px;background:#fff;border:0.7px solid #cdcdcd;border-radius:1.5px;box-sizing:border-box"></div>
<div class="t" style="left:821.4px;width:20.6px;text-align:right;top:278.48px;font-size:6px;font-weight:700;color:#111">0.00</div>
<div style="position:absolute;left:744px;top:294.88px;width:99.6px;height:3.4px;background:#cbcbcb;border-radius:1.7px"></div>
<div style="position:absolute;left:744px;top:294.88px;width:49.5px;height:3.4px;background:#3a8dd2;border-radius:1.7px"></div>
<div style="position:absolute;left:789.7px;top:292.97999999999996px;width:7.6px;height:7.2px;background:linear-gradient(#fff,#efefef);border:0.7px solid #b8b8b8;border-radius:2.6px;box-sizing:border-box;box-shadow:0 0.5px 0.8px rgba(0,0,0,0.15)"></div>
<div class="t" style="left:743.2px;top:311.56px;font-size:6.05px;color:#1c1c1c;font-weight:700;">r_shoulder_roll</div>
<div style="position:absolute;left:821.4px;top:312.96000000000004px;width:22.2px;height:10.4px;background:#fff;border:0.7px solid #cdcdcd;border-radius:1.5px;box-sizing:border-box"></div>
<div class="t" style="left:821.4px;width:20.6px;text-align:right;top:312.26000000000005px;font-size:6px;font-weight:700;color:#111">0.000</div>
<div style="position:absolute;left:1px;top:346.2px;width:885px;height:10.5px;background:#bababa"></div>
<svg style="position:absolute;left:2.5px;top:347px" width="9" height="9"><circle cx="4.3" cy="4.4" r="3.4" fill="#f4f4f4" stroke="#333" stroke-width="0.9"/><path d="M4.3 2.2L4.3 4.5L5.9 5.4" stroke="#333" stroke-width="0.8" fill="none"/></svg>
<div class="t" style="left:14px;top:345.80px;font-size:6.8px;color:#1e1e1e;font-weight:400;">Time</div>
<div style="position:absolute;left:880px;top:347.6px;width:6px;height:7px;background:#f4f4f4"></div>
<svg style="position:absolute;left:880px;top:347.6px" width="7" height="7"><circle cx="3.8" cy="3.5" r="3.2" fill="#d42020"/><path d="M2.4 2.1L5.2 4.9M5.2 2.1L2.4 4.9" stroke="#fff" stroke-width="0.9"/></svg>
<div class="t" style="left:6.5px;top:362.20px;font-size:6.4px;color:#1e1e1e;font-weight:400;">ROS Time:</div>
<div style="position:absolute;left:41.5px;top:361.5px;width:62.5px;height:11.1px;background:#fff;border:0.8px solid #c8c8c8;border-radius:1.5px;box-sizing:border-box"></div>
<div class="t" style="left:43.7px;top:362.20px;font-size:6.4px;color:#1e1e1e;font-weight:400;">1758004780.30</div>
<div class="t" style="left:107.6px;top:362.20px;font-size:6.4px;color:#1e1e1e;font-weight:400;">ROS Elapsed:</div>
<div style="position:absolute;left:151.4px;top:361.5px;width:62.6px;height:11.1px;background:#fff;border:0.8px solid #c8c8c8;border-radius:1.5px;box-sizing:border-box"></div>
<div class="t" style="left:153.6px;top:362.20px;font-size:6.4px;color:#1e1e1e;font-weight:400;">637.88</div>
<div class="t" style="left:217.3px;top:362.20px;font-size:6.4px;color:#1e1e1e;font-weight:400;">Wall Time:</div>
<div style="position:absolute;left:252.4px;top:361.5px;width:62.2px;height:11.1px;background:#fff;border:0.8px solid #c8c8c8;border-radius:1.5px;box-sizing:border-box"></div>
<div class="t" style="left:254.6px;top:362.20px;font-size:6.4px;color:#1e1e1e;font-weight:400;">1758004780.50</div>
<div class="t" style="left:318px;top:362.20px;font-size:6.4px;color:#1e1e1e;font-weight:400;">Wall Elapsed:</div>
<div style="position:absolute;left:362.4px;top:361.5px;width:62.4px;height:11.1px;background:#fff;border:0.8px solid #c8c8c8;border-radius:1.5px;box-sizing:border-box"></div>
<div class="t" style="left:364.59999999999997px;top:362.20px;font-size:6.4px;color:#1e1e1e;font-weight:400;">637.88</div>
<div style="position:absolute;left:830.3px;top:363.3px;width:7.4px;height:7.7px;background:#fff;border:0.8px solid #b8b8b8;border-radius:1px;box-sizing:border-box"></div>
<div class="t" style="left:840.3px;top:362.00px;font-size:6.9px;color:#1e1e1e;font-weight:400;">Experimental</div>
<div style="position:absolute;left:2px;top:378.6px;width:25px;height:11.1px;background:#f8f8f8;border:0.8px solid #c8c8c8;border-radius:1.5px;box-sizing:border-box"></div>
<div class="t" style="left:6px;top:379.00px;font-size:6.6px;color:#1e1e1e;font-weight:400;">Reset</div>
<div class="t" style="left:30.5px;top:378.70px;font-size:6.92px;color:#1e1e1e;font-weight:400;"><b>Left-Click:</b> Rotate. <b>Middle-Click:</b> Move X/Y. <b>Right-Click/Mouse Wheel:</b> Zoom. <b>Shift:</b> More options.</div>
<div class="t" style="left:873.6px;top:377.50px;font-size:6.8px;color:#1e1e1e;font-weight:400;">5 fps</div>
<div style="position:absolute;left:0px;top:391.2px;width:886px;height:1.3px;background:#1a1a1a"></div>
<div style="position:absolute;left:0px;top:392.5px;width:540.6px;height:9.5px;background:#bab4ac"></div>
<div style="position:absolute;left:191.1px;top:392.5px;width:1.7px;height:9.5px;background:#8a8680"></div>
<div style="position:absolute;left:540.6px;top:392.5px;width:345.4px;height:9.5px;background:#ffffff"></div>
<svg style="position:absolute;left:3px;top:395px" width="5" height="6"><path d="M4.5 0.5L0.7 3L4.5 5.5Z" fill="#333"/></svg>
<div class="t" style="left:11.5px;top:392.40px;font-size:9.6px;color:#3a3a3a;font-weight:700;">Workspace 1</div>
<svg style="position:absolute;left:75px;top:395px" width="5" height="6"><path d="M0.5 0.5L4.3 3L0.5 5.5Z" fill="#333"/></svg>
<div class="t" style="left:86px;top:392.60px;font-size:8.15px;color:#3a3a3a;font-weight:700;">16 Sep, Tue 06:39:39</div>
<svg style="position:absolute;left:174px;top:395.3px" width="5" height="6"><path d="M4.5 0.5L0.7 3L4.5 5.5Z" fill="#333"/></svg>
<svg style="position:absolute;left:184px;top:395.3px" width="5" height="6"><path d="M0.5 0.5L4.3 3L0.5 5.5Z" fill="#333"/></svg>
<svg style="position:absolute;left:193px;top:395px" width="10" height="7"><g fill="#f0eeea" opacity="0.9"><ellipse cx="2" cy="3" rx="1.6" ry="2.2"/><ellipse cx="5" cy="2.6" rx="1.3" ry="1.6"/><ellipse cx="8" cy="3" rx="1.5" ry="1.3"/><ellipse cx="3" cy="5.3" rx="1.2" ry="1"/></g></svg>
<div class="t" style="left:204.5px;top:392.60px;font-size:7.6px;color:#4a4640;font-weight:400;">/home/reachy/reachy_ws/install/reachy_description/share/reachy_description/config/reachy.rviz* - R</div>
<div class="t" style="left:674.2px;top:392.60px;font-size:8px;color:#222;font-weight:700;">Joint State Publisher</div>
</div></body></html>
